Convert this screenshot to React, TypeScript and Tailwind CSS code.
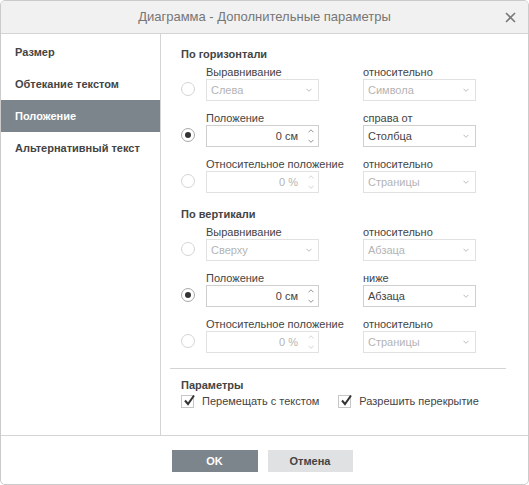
import React from "react";

const font = { fontFamily: '"Liberation Sans", Arial, sans-serif' };

function Chevron() {
  return (
    <svg width="6" height="4" viewBox="0 0 6 4">
      <path d="M0.5 0.8 L3 3.3 L5.5 0.8" fill="none" stroke="#a8a8a8" strokeWidth="0.8" />
    </svg>
  );
}

function Select({ value, disabled }: { value: string; disabled?: boolean }) {
  return (
    <div
      className={`flex h-[22px] w-[113px] items-center justify-between border pl-[4px] pr-[6px] text-[11px] ${
        disabled ? "border-[#e1e1e1] text-[#b4b4b4]" : "border-[#cfcfcf] text-[#444]"
      }`}
    >
      <span>{value}</span>
      <Chevron />
    </div>
  );
}

function Spin({ value, disabled }: { value: string; disabled?: boolean }) {
  const c = disabled ? "#c8c8c8" : "#777";
  return (
    <div
      className={`flex h-[22px] w-[113px] items-center justify-end border pr-[3px] text-[11px] ${
        disabled ? "border-[#e1e1e1] text-[#b4b4b4]" : "border-[#cfcfcf] text-[#444]"
      }`}
    >
      <span className="mr-[9px]">{value}</span>
      <div className="flex h-full w-[8px] flex-col items-center justify-center gap-[6px]">
        <svg width="6" height="4" viewBox="0 0 6 4">
          <path d="M0.5 3.3 L3 0.8 L5.5 3.3" fill="none" stroke={c} strokeWidth="0.8" />
        </svg>
        <svg width="6" height="4" viewBox="0 0 6 4">
          <path d="M0.5 0.8 L3 3.3 L5.5 0.8" fill="none" stroke={c} strokeWidth="0.8" />
        </svg>
      </div>
    </div>
  );
}

function Radio({ checked }: { checked?: boolean }) {
  return (
    <div
      className={`flex h-[14px] w-[14px] items-center justify-center rounded-full border ${
        checked ? "border-[#a9a9a9]" : "border-[#d4d4d4]"
      }`}
    >
      {checked && <div className="h-[6px] w-[6px] rounded-full bg-[#333]" />}
    </div>
  );
}

function Row({
  checked,
  label1,
  label2,
  field1,
  field2,
}: {
  checked?: boolean;
  label1: string;
  label2: string;
  field1: React.ReactNode;
  field2: React.ReactNode;
}) {
  return (
    <div className="flex">
      <div className="flex w-[25px] flex-col pt-[17px]">
        <Radio checked={checked} />
      </div>
      <div className="flex w-[157px] flex-col">
        <div className="h-[14px] leading-[14px] text-[11px] text-[#444]">{label1}</div>
        {field1}
      </div>
      <div className="flex flex-col">
        <div className="h-[14px] leading-[14px] text-[11px] text-[#444]">{label2}</div>
        {field2}
      </div>
    </div>
  );
}

function Check({ label }: { label: string }) {
  return (
    <div className="flex items-center">
      <div className="relative h-[13px] w-[13px] border border-[#c6c6c6] bg-white">
        <svg width="13" height="13" viewBox="0 0 13 13" className="absolute left-[1px] top-[-2px]">
          <path d="M2 6.5 L5 10 L11 1.5" fill="none" stroke="#333" strokeWidth="2" />
        </svg>
      </div>
      <span className="ml-[8px] text-[11px] text-[#444] leading-[14px]">{label}</span>
    </div>
  );
}

export default function App() {
  return (
    <div style={font} className="h-[485px] w-[529px] bg-white">
      <div className="flex h-[485px] w-[529px] flex-col overflow-hidden rounded-[5px] border border-[#cbcbcb] bg-white">
        <div className="relative flex h-[33px] shrink-0 items-center justify-center border-b border-[#d4d4d4] bg-[#f1f1f1]">
          <span className="text-[13px] text-[#767676]">Диаграмма - Дополнительные параметры</span>
          <svg width="11" height="11" viewBox="0 0 11 11" className="absolute right-[12px] top-[11px]">
            <path d="M1 1 L10 10 M10 1 L1 10" stroke="#7a7a7a" strokeWidth="1.6" />
          </svg>
        </div>
        <div className="flex h-[401px] shrink-0">
          <div className="flex w-[160px] shrink-0 flex-col border-r border-[#d4d4d4] pt-[2px]">
            {["Размер", "Обтекание текстом", "Положение", "Альтернативный текст"].map((t) => (
              <div
                key={t}
                className={`flex h-[32px] items-center pl-[14px] text-[11px] font-bold ${
                  t === "Положение" ? "bg-[#7d858c] text-white" : "text-[#444]"
                }`}
              >
                {t}
              </div>
            ))}
          </div>
          <div className="flex flex-1 flex-col">
            <div className="flex flex-col pl-[20px] pt-[13px]">
              <div className="h-[14px] text-[11px] font-bold leading-[14px] text-[#444]">По горизонтали</div>
              <div className="mt-[4px] flex flex-col gap-[10px]">
                <Row
                  label1="Выравнивание"
                  label2="относительно"
                  field1={<Select value="Слева" disabled />}
                  field2={<Select value="Символа" disabled />}
                />
                <Row
                  checked
                  label1="Положение"
                  label2="справа от"
                  field1={<Spin value="0 см" />}
                  field2={<Select value="Столбца" />}
                />
                <Row
                  label1="Относительное положение"
                  label2="относительно"
                  field1={<Spin value="0 %" disabled />}
                  field2={<Select value="Страницы" disabled />}
                />
              </div>
              <div className="mt-[14px] h-[14px] text-[11px] font-bold leading-[14px] text-[#444]">По вертикали</div>
              <div className="mt-[4px] flex flex-col gap-[10px]">
                <Row
                  label1="Выравнивание"
                  label2="относительно"
                  field1={<Select value="Сверху" disabled />}
                  field2={<Select value="Абзаца" disabled />}
                />
                <Row
                  checked
                  label1="Положение"
                  label2="ниже"
                  field1={<Spin value="0 см" />}
                  field2={<Select value="Абзаца" />}
                />
                <Row
                  label1="Относительное положение"
                  label2="относительно"
                  field1={<Spin value="0 %" disabled />}
                  field2={<Select value="Страницы" disabled />}
                />
              </div>
            </div>
            <div className="ml-[9px] mr-[22px] mt-[15px] h-px bg-[#d4d4d4]" />
            <div className="flex flex-col pl-[20px] pt-[9px]">
              <div className="h-[14px] text-[11px] font-bold leading-[14px] text-[#444]">Параметры</div>
              <div className="mt-[2px] flex gap-[19px]">
                <Check label="Перемещать с текстом" />
                <Check label="Разрешить перекрытие" />
              </div>
            </div>
          </div>
        </div>
        <div className="flex flex-1 justify-center gap-[10px] border-t border-[#d4d4d4] pr-[5px] pt-[14px]">
          <div className="flex h-[22px] w-[86px] items-center justify-center bg-[#7d858c] text-[11px] font-bold text-white">
            OK
          </div>
          <div className="flex h-[22px] w-[85px] items-center justify-center bg-[#dfe1e3] text-[11px] font-bold text-[#444]">
            Отмена
          </div>
        </div>
      </div>
    </div>
  );
}
